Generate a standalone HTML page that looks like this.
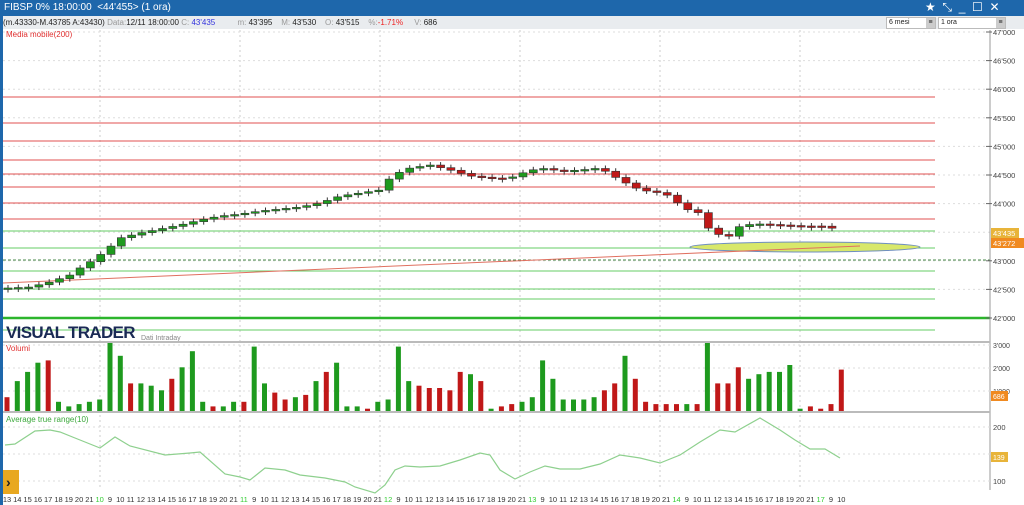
<!DOCTYPE html>
<html><head><meta charset="utf-8"><style>
body{margin:0;width:1024px;height:505px;overflow:hidden;background:#fff;font-family:"Liberation Sans",sans-serif}
#t{position:absolute;left:0;top:0;width:1024px;height:16px;background:#1e67ab;color:#fff;font-size:10px;line-height:15px}
#i{position:absolute;left:3px;top:16px;width:1021px;height:13px;background:#e9ecef;font-size:8px;line-height:13px;color:#222;white-space:nowrap}
svg{position:absolute;left:0;top:0}
</style></head><body>
<div id="t"><span style="margin-left:4px">FIBSP 0% 18:00:00 &nbsp;&lt;44'455&gt; (1 ora)</span>
<span style="position:absolute;left:925px;top:0;font-size:12px">★ &nbsp;⤡ &nbsp;_ &nbsp;☐ &nbsp;✕</span></div>
<div id="i">(m.43330-M.43785 A:43430) <span style="color:#999">Data:</span>12/11 18:00:00 <span style="color:#999">C:</span> <span style="color:#33d">43'435</span>
<span style="margin-left:20px;color:#999">m:</span> 43'395 &nbsp;&nbsp;&nbsp;<span style="color:#999">M:</span> 43'530 &nbsp;&nbsp;&nbsp;<span style="color:#999">O:</span> 43'515 &nbsp;&nbsp;&nbsp;<span style="color:#999">%:</span><span style="color:#e22">-1.71%</span> &nbsp;&nbsp;&nbsp;&nbsp;<span style="color:#999">V:</span> 686
<span style="position:absolute;left:883px;top:1px;width:48px;height:10px;background:#fff;border:1px solid #bbb;line-height:10px;font-size:7px">&nbsp;6 mesi<span style="float:right;background:#ccc;width:9px;text-align:center">≡</span></span>
<span style="position:absolute;left:935px;top:1px;width:66px;height:10px;background:#fff;border:1px solid #bbb;line-height:10px;font-size:7px">&nbsp;1 ora<span style="float:right;background:#ccc;width:9px;text-align:center">≡</span></span></div>
<svg id="s" width="1024" height="505"></svg>
<script>
let h='';const W=1024;
function L(x1,y1,x2,y2,c,w,d){h+=`<line x1="${x1}" y1="${y1}" x2="${x2}" y2="${y2}" stroke="${c}" stroke-width="${w||1}" ${d?'stroke-dasharray="'+d+'"':''}/>`}
function T(x,y,s,c,f,a){h+=`<text x="${x}" y="${y}" fill="${c||'#333'}" font-size="${f||8}" ${a?'text-anchor="'+a+'"':''}>${s}</text>`}
h+='<rect x="0" y="16" width="3" height="489" fill="#1e67ab"/>';
[100,240,380,520,660,800].forEach(x=>L(x,30,x,490,'#ccc',1,'2 3'));
for(let k=0;k<11;k++){let y=32+k*28.6;L(3,y,990,y,'#ddd',1,'2 3')}
[97,123,141,160,174,187,203,219].forEach(y=>L(3,y,935,y,'#e05050',1));
[231,248,271,289,299,330].forEach(y=>L(3,y,935,y,'#66cc66',1));
L(3,260,990,260,'#4a8a4a',1,'3 2');L(3,318,990,318,'#2cb52c',2.5);
L(990,30,990,490,'#999',1);
const pl=['47000','46500','46000','45500','45000','44500','44000','43500','43000','42500','42000'];
pl.forEach((p,k)=>{let y=32+k*28.6;if(k!=7){L(986,y,992,y,'#666');T(993,y+3,p.slice(0,2)+"'"+p.slice(2),'#444',7.5)}});
h+='<rect x="991" y="228" width="28" height="10" fill="#e8b43a"/><rect x="991" y="238" width="33" height="10" fill="#f08a20"/>';
T(993,236,"43'435",'#fff',7.5);T(993,246,"43'272",'#fff',7.5);
h+='<ellipse cx="805" cy="247" rx="115" ry="5" fill="#d8e86a" stroke="#6f8fc0"/>';
L(3,283,860,246,'#e07060',1);
const P=[[8,288],[30,287],[50,282],[70,275],[80,268],[90,262],[100,255],[110,247],[120,238],[140,233],[160,229],[180,225],[200,220],[220,216],[240,214],[260,211],[280,209],[300,207],[320,203],[340,196],[360,193],[380,190],[390,178],[400,172],[410,168],[430,165],[450,170],[470,176],[490,178],[510,178],[525,172],[540,168],[560,171],[580,170],[600,168],[620,180],[640,190],[660,193],[670,196],[680,205],[690,211],[700,213],[710,231],[720,235],[735,237],[740,225],[760,224],[780,225],[800,226],[820,226],[830,227],[840,233]];
function iy(x){for(let i=1;i<P.length;i++)if(x<=P[i][0]){let a=P[i-1],b=P[i];return a[1]+(b[1]-a[1])*(x-a[0])/(b[0]-a[0])}return P[P.length-1][1]}
let prev=iy(4);
for(let x=8;x<=842;x+=10.3){let c=iy(x),o=prev;prev=c;let up=c<o,col=up?'#1e9a1e':'#c01818';let t=Math.min(o,c),b=Math.max(o,c);if(b-t<1.5){b=t+1.5}
L(x,t-3,x,b+3,'#333');h+=`<rect x="${x-4}" y="${t}" width="8" height="${b-t}" fill="${col}" stroke="#333" stroke-width="0.6"/>`}
T(6,28+9,'Media mobile(200)','#e03030',8);
h+=`<text x="6" y="338" fill="#1a2a55" font-size="17" font-weight="bold" letter-spacing="0.5" textLength="130">VISUAL TRADER</text>`;T(141,340,'Dati Intraday','#888',7);
L(3,342,990,342,'#bbb',2);L(3,412,990,412,'#bbb',2);
[345,368,391].forEach((y,k)=>{L(3,y,990,y,'#ddd',1,'2 3');T(993,y+3,['3\'000','2\'000','1\'000'][k],'#444',7)});
T(6,351,'Volumi','#e03030',8);
const V=[.6,1.3,1.7,2.1,2.2,.4,.2,.3,.4,.5,3,2.4,1.2,1.2,1.1,.9,1.4,1.9,2.6,.4,.2,.2,.4,.4,2.8,1.2,.8,.5,.6,.7,1.3,1.7,2.1,.2,.2,.1,.4,.5,2.8,1.3,1.1,1,1,.9,1.7,1.6,1.3,.1,.2,.3,.4,.6,2.2,1.4,.5,.5,.5,.6,.9,1.2,2.4,1.4,.4,.3,.3,.3,.3,.3,3,1.2,1.2,1.9,1.4,1.6,1.7,1.7,2,.1,.2,.1,.3,1.8,1.2,.7];
const up=[0,1,1,1,0,1,1,1,1,1,1,1,0,1,1,1,0,1,1,1,0,1,1,0,1,1,0,0,1,0,1,0,1,1,1,0,1,1,1,1,0,0,0,0,0,1,0,1,0,0,1,1,1,1,1,1,1,1,0,0,1,0,0,0,0,0,1,0,1,0,0,0,1,1,1,1,1,1,0,0,0,0,1,0,0];
for(let k=0;k<V.length-2;k++){let x=7+k*10.3,hh=Math.min(V[k]*23,68);h+=`<rect x="${x-2.5}" y="${411-hh}" width="5" height="${hh}" fill="${up[k]?'#1e9a1e':'#c01818'}"/>`}
h+='<rect x="991" y="391" width="17" height="10" fill="#f08a20"/>';T(993,399,'686','#fff',7);
T(6,422,'Average true range(10)','#3aa83a',8);
[427,454,481].forEach((y,k)=>{L(3,y,990,y,'#ddd',1,'2 3');T(993,y+3,['200','150','100'][k],'#444',7.5)});
h+='<rect x="991" y="452" width="17" height="10" fill="#e8b43a"/>';T(993,460,'139','#fff',7);
const A=[[5,445],[15,444],[35,431],[50,430],[60,432],[75,438],[100,448],[115,437],[130,446],[165,455],[190,453],[200,452],[225,474],[240,477],[250,480],[265,468],[285,470],[300,475],[325,478],[345,482],[355,487],[375,493],[385,485],[395,470],[405,466],[420,467],[440,466],[460,460],[480,453],[490,455],[500,470],[515,479],[530,472],[545,466],[560,469],[580,469],[600,464],[620,455],[640,458],[660,463],[680,455],[700,442],[720,430],[735,432],[760,418],[780,430],[795,440],[810,449],[825,449],[840,458]];
h+=`<polyline points="${A.map(p=>p.join(',')).join(' ')}" fill="none" stroke="#8ed08e" stroke-width="1.2"/>`;
h+='<rect x="3" y="470" width="16" height="24" fill="#e8a820"/><text x="6" y="487" font-size="14" font-weight="bold" fill="#222">›</text>';
let labs=['13','14','15','16','17','18','19','20','21'],days=['10','11','12','13','14','17'],g=[];
labs.forEach(l=>g.push([l,0]));
days.forEach(d=>{g.push([d,1]);for(let hr=9;hr<=21;hr++)g.push([''+hr,0])});
for(let k=0;k<82&&k<g.length;k++){T(7+k*10.3,502,g[k][0],g[k][1]?'#3c3':'#333',7.5,'middle')}
document.getElementById('s').innerHTML=h;
</script>
</body></html>
